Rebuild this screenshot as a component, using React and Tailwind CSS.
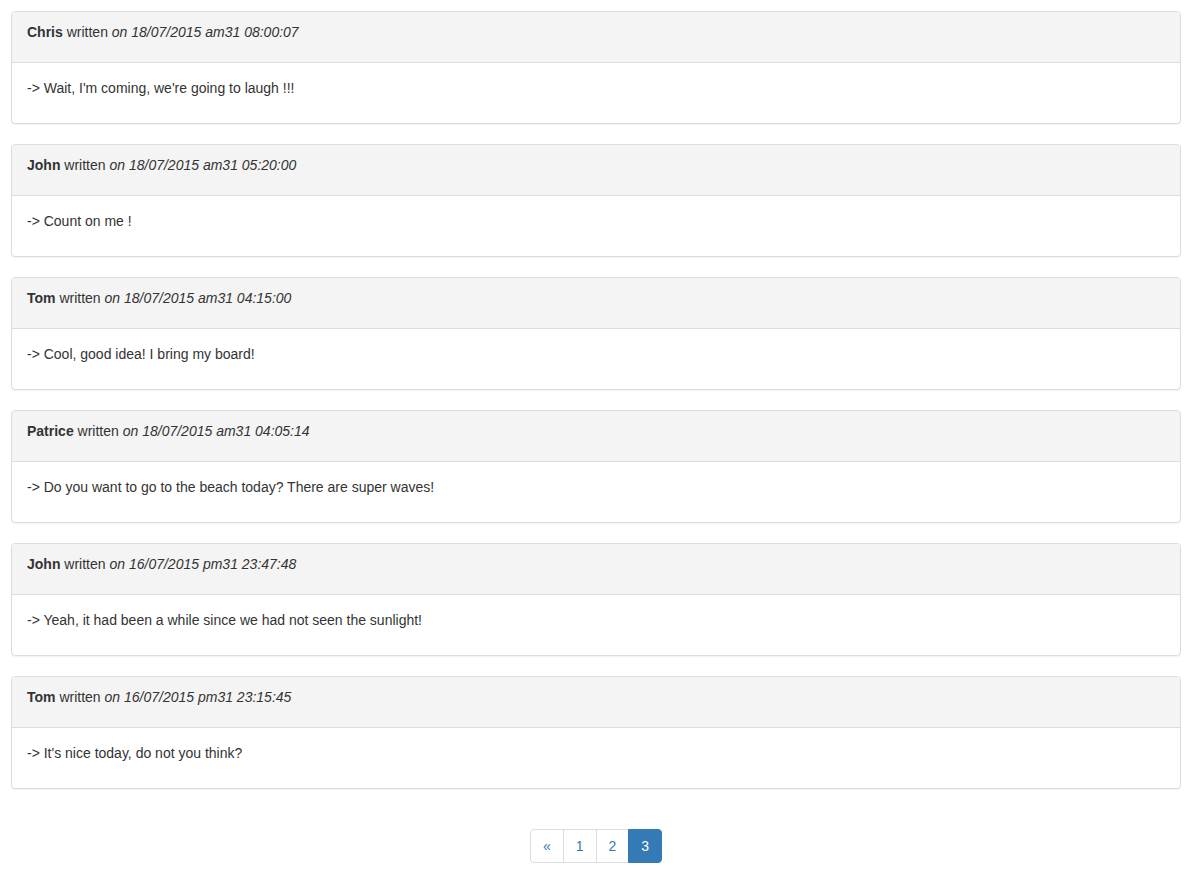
const MESSAGES = [
  { author: 'Chris', date: '18/07/2015 am31 08:00:07', text: "-> Wait, I'm coming, we're going to laugh !!!" },
  { author: 'John', date: '18/07/2015 am31 05:20:00', text: '-> Count on me !' },
  { author: 'Tom', date: '18/07/2015 am31 04:15:00', text: '-> Cool, good idea! I bring my board!' },
  { author: 'Patrice', date: '18/07/2015 am31 04:05:14', text: '-> Do you want to go to the beach today? There are super waves!' },
  { author: 'John', date: '16/07/2015 pm31 23:47:48', text: '-> Yeah, it had been a while since we had not seen the sunlight!' },
  { author: 'Tom', date: '16/07/2015 pm31 23:15:45', text: "-> It's nice today, do not you think?" },
];

const PAGES = ['«', '1', '2', '3'];

export default function App() {
  return (
    <div className="min-h-screen bg-white pl-[11px] pr-[12px] pt-[11px] text-[14px] leading-[20px] text-[#333] [font-family:'Liberation_Sans',Arial,sans-serif]">
      {MESSAGES.map((m, i) => (
        <div
          key={i}
          className="mb-[20px] rounded-[4px] border border-[#ddd] bg-white shadow-[0_1px_1px_rgba(0,0,0,0.05)]"
        >
          {/* heading */}
          <div className="rounded-t-[3px] border-b border-[#ddd] bg-[#f4f4f4] px-[15px] pt-[10px] pb-[20px]">
            <strong>{m.author}</strong> written <em>on {m.date}</em>
          </div>
          {/* body */}
          <div className="px-[15px] pt-[15px] pb-[15px]">
            <p className="mb-[10px]">{m.text}</p>
          </div>
        </div>
      ))}

      {/* pagination */}
      <div className="flex justify-center pt-[20px] pb-[20px]">
        <ul className="flex">
          {PAGES.map((p, i) => {
            const active = p === '3';
            return (
              <li key={i}>
                <a
                  className={
                    'block px-[12px] py-[6px] border ' +
                    (i > 0 ? '-ml-px ' : 'rounded-l-[4px] ') +
                    (i === PAGES.length - 1 ? 'rounded-r-[4px] ' : '') +
                    (active
                      ? 'relative z-10 border-[#337ab7] bg-[#337ab7] text-white'
                      : 'border-[#ddd] bg-white text-[#337ab7]')
                  }
                >
                  {p}
                </a>
              </li>
            );
          })}
        </ul>
      </div>
    </div>
  );
}
